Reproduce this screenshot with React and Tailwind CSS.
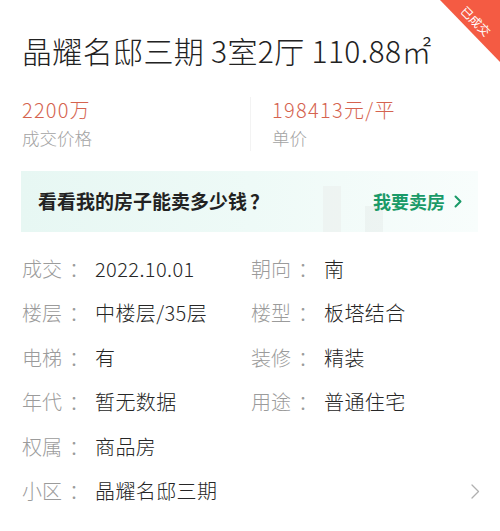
import React from "react";

const font = { fontFamily: '"Noto Sans CJK SC", "Noto Sans", sans-serif' };

function Label({ k }) {
  return (
    <span className="flex w-[73px] shrink-0 text-[#9b9b9b]">
      {k}
      <span className="ml-[7px]">：</span>
    </span>
  );
}

function Row({ items }) {
  return (
    <div className="flex h-[44.5px] items-center text-[20px] font-light leading-[28px]">
      {items.map(([k, v], i) => (
        <div key={i} className={i === 0 ? "flex w-[229px] items-center" : "flex items-center"}>
          <Label k={k} />
          <span className="tracking-[0.4px] text-[#262626]">{v}</span>
        </div>
      ))}
    </div>
  );
}

export default function App() {
  return (
    <div className="relative h-[531px] w-[500px] overflow-hidden bg-white" style={font}>
      <svg className="absolute right-0 top-0" width="60" height="62" viewBox="0 0 60 62">
        <polygon points="0,0 60,0 60,62" fill="#f45b43" />
      </svg>
      <div className="absolute right-[-6px] top-[14px] w-[60px] rotate-45 text-center text-[12px] leading-[14px] text-white">
        已成交
      </div>

      <div className="pl-[22px] pt-[30px]">
        <div className="h-[40px] text-[30px] font-light leading-[40px] tracking-[0.35px] text-[#222222]">晶耀名邸三期 3室2厅 110.88㎡</div>
      </div>

      <div className="mt-[27px] flex pl-[22px] font-light">
        <div className="w-[228px]">
          <div className="text-[20px] leading-[26px] tracking-[1.2px] text-[#d5634f]">2200万</div>
          <div className="mt-[1.5px] text-[17.5px] leading-[26px] text-[#a3a3a3]">成交价格</div>
        </div>
        <div className="border-l border-[#f3f3f3] pl-[21px]">
          <div className="text-[20px] leading-[26px] tracking-[1.3px] text-[#d5634f]">198413元/平</div>
          <div className="mt-[1.5px] text-[17.5px] leading-[26px] text-[#a3a3a3]">单价</div>
        </div>
      </div>

      <div className="relative ml-[21px] mt-[20px] flex h-[61px] w-[457px] items-center justify-between overflow-hidden bg-gradient-to-r from-[#e7f7f3] via-[#eefaf7] to-[#f8fdfc] pl-[17px] pr-[16px]">
        <div className="absolute bottom-0 left-[302px] h-[46px] w-[18px] bg-[#e9eeec] opacity-50" />
        <div className="absolute bottom-0 left-[344px] h-[26px] w-[18px] bg-[#e6ebe9] opacity-50" />
        <span className="relative text-[19px] font-bold leading-[26px] text-[#222222]">
          看看我的房子能卖多少钱<span className="ml-[3px]">？</span>
        </span>
        <span className="relative flex items-center gap-[9px] text-[18px] font-bold leading-[26px] text-[#1a9a68]">
          我要卖房
          <svg width="8" height="13" viewBox="0 0 8 13" fill="none">
            <path d="M1.5 1.5 L6.5 6.5 L1.5 11.5" stroke="#1a9a68" strokeWidth="2" strokeLinecap="round" strokeLinejoin="round" />
          </svg>
        </span>
      </div>

      <div className="mt-[15px] pl-[22px]">
        <Row items={[["成交", "2022.10.01"], ["朝向", "南"]]} />
        <Row items={[["楼层", "中楼层/35层"], ["楼型", "板塔结合"]]} />
        <Row items={[["电梯", "有"], ["装修", "精装"]]} />
        <Row items={[["年代", "暂无数据"], ["用途", "普通住宅"]]} />
        <Row items={[["权属", "商品房"]]} />
        <div className="flex h-[44.5px] items-center justify-between pr-[20px] text-[20px] font-light leading-[28px]">
          <div className="flex items-center">
            <Label k="小区" />
            <span className="tracking-[0.4px] text-[#262626]">晶耀名邸三期</span>
          </div>
          <svg width="9" height="15" viewBox="0 0 9 15" fill="none">
            <path d="M1 1 L7.5 7.5 L1 14" stroke="#b0b0b0" strokeWidth="1.3" strokeLinecap="round" strokeLinejoin="round" />
          </svg>
        </div>
      </div>
    </div>
  );
}
